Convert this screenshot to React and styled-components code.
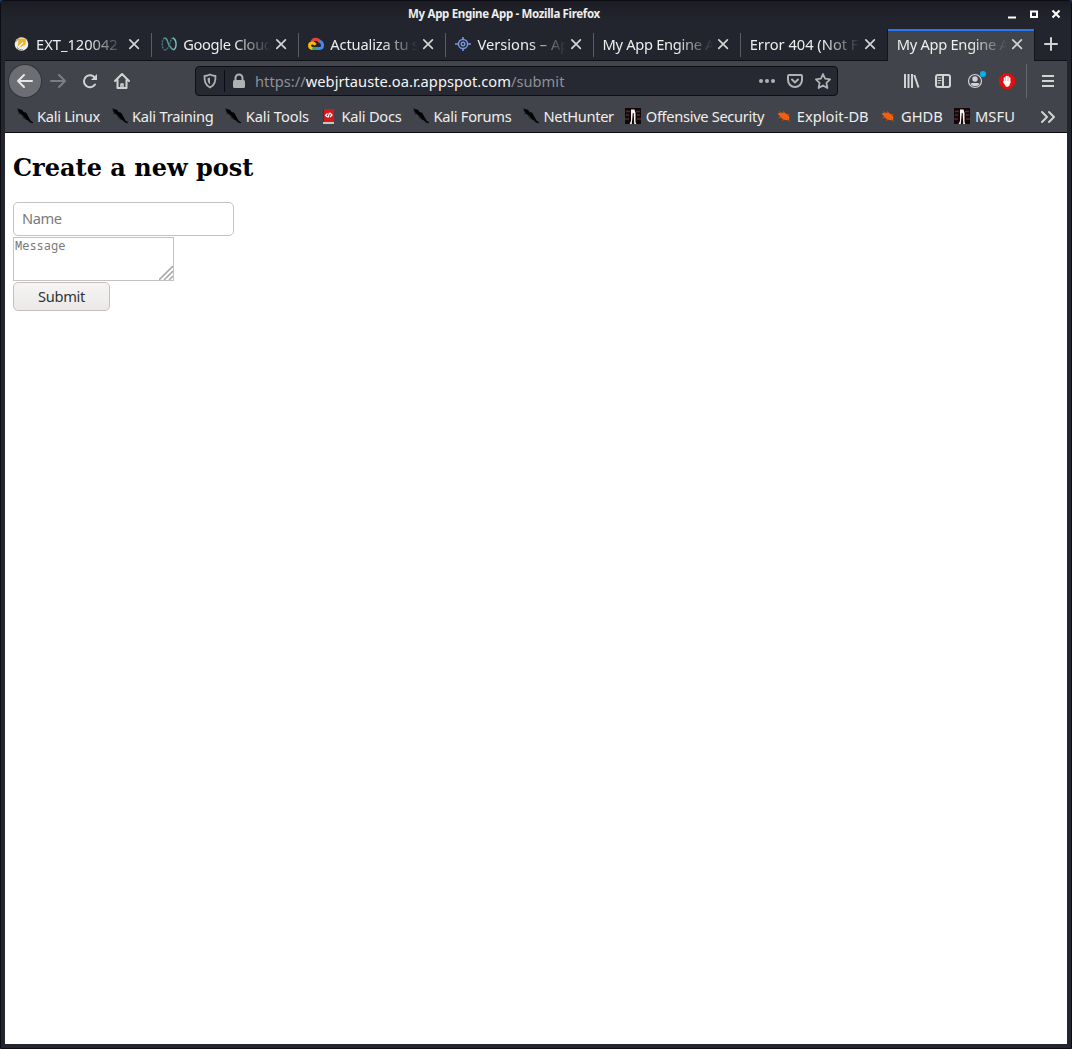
import React from 'react';
import styled, { createGlobalStyle, css } from 'styled-components';

const ui = '"Noto Sans", "Open Sans", sans-serif';

const Global = createGlobalStyle`
  html, body { margin: 0; padding: 0; background: #1d3a66; overflow: hidden; }
  *, *::before, *::after { box-sizing: border-box; }
`;

const Frame = styled.div`
  width: 1072px;
  height: 1049px;
  display: flex;
  flex-direction: column;
  padding: 0 4px 4px;
  border: 1px solid #0c0d12;
  border-radius: 4px 4px 2px 2px;
  background: #23252e;
  font-family: ${ui};
  font-size: 14.67px;
  color: #eeeeec;
`;

const TitleBar = styled.header`
  height: 27px;
  flex: none;
  display: grid;
  grid-template-columns: 14px 1fr 78px;
  align-items: center;
  margin: 0 -4px;
  padding-bottom: 2px;
  background: linear-gradient(#1b1c23, #23252e 70%);
  border-radius: 4px 4px 0 0;
`;

const Title = styled.div`
  grid-column: 2;
  justify-self: center;
  font-weight: 700;
  font-size: 11.5px;
  line-height: 24px;
  letter-spacing: -0.33px;
  white-space: nowrap;
`;

const Controls = styled.div`
  display: flex;
  justify-content: flex-end;
  gap: 8px;
  padding-right: 8px;
`;

const Glyph = styled.svg`
  display: block;
  flex: none;
  overflow: visible;
  width: ${(p) => p.$s || 16}px;
  height: ${(p) => p.$s || 16}px;
`;

const TabStrip = styled.nav`
  height: 33px;
  flex: none;
  display: flex;
  border-bottom: 1px solid #101118;
`;

const Tab = styled.div`
  width: 147.15px;
  flex: none;
  display: flex;
  align-items: center;
  padding: 0 12px 0 9px;
  height: 32px;
  background-image: linear-gradient(#5a5c63, #5a5c63);
  background-size: 1px 24px;
  background-position: right 5px;
  background-repeat: no-repeat;
  ${(p) => p.$last && css`background-image: none;`}
  ${(p) => p.$active && css`
    width: 146px;
    margin-top: 1px;
    background: #42444b;
    border-top: 2px solid #2a76f0;
    padding-bottom: 4px;
    padding-right: 11px;
    box-shadow: -1px 0 #14151b, 1px 0 #14151b;
  `}
`;

const TabLabel = styled.div`
  flex: 1;
  min-width: 0;
  overflow: hidden;
  white-space: nowrap;
  line-height: 24px;
  letter-spacing: ${(p) => p.$track || 0}px;
  margin-left: ${(p) => (p.$icon ? 6 : 0)}px;
  margin-right: 4px;
  mask-image: linear-gradient(to left, transparent, #000 36px);
`;

const NewTab = styled.div`
  flex: 1;
  display: grid;
  place-items: center;
  padding-left: 2px;
`;

const NavBar = styled.div`
  height: 40px;
  flex: none;
  display: flex;
  align-items: center;
  background: #42444b;
`;

const NavButton = styled.div`
  width: 32px;
  height: 32px;
  flex: none;
  display: grid;
  place-items: center;
  border-radius: 50%;
  ${(p) => p.$round && css`
    margin: 0 1px 0 4px;
    background: #6d6e73;
    box-shadow: 0 0 0 1px #33353b;
  `}
`;

const UrlBar = styled.div`
  width: 643px;
  height: 30px;
  margin-left: 57px;
  display: flex;
  align-items: center;
  border: 1px solid #0e0f14;
  border-radius: 4px;
  background: #272932;
  padding: 0 6px;
`;

const UrlDivider = styled.div`
  width: 1px;
  height: 22px;
  background: #0c0d12;
  margin: 0 6px;
`;

const Url = styled.div`
  flex: 1;
  margin-left: 8px;
  white-space: nowrap;
  color: #8e9096;
  letter-spacing: 0.03px;
`;

const Host = styled.span`
  color: #f5f5f5;
`;

const UrlActions = styled.div`
  display: flex;
  gap: 12px;
`;

const Tools = styled.div`
  flex: 1;
  display: flex;
  justify-content: flex-end;
  align-items: center;
  padding-right: 3px;
`;

const Divider = styled.div`
  width: 1px;
  height: 34px;
  margin: 0 5px 0 3px;
  background: #66686d;
`;

const Bookmarks = styled.div`
  height: 32px;
  flex: none;
  display: flex;
  align-items: center;
  padding: 0 0 1px 11.5px;
  background: #42444b;
  border-bottom: 1px solid #0c0d12;
`;

const Bookmark = styled.div`
  width: ${(p) => p.$w}px;
  height: 28px;
  flex: none;
  display: flex;
  align-items: center;
  gap: 4.5px;
  white-space: nowrap;
  letter-spacing: ${(p) => p.$track || 0}px;
`;

const BookmarkLabel = styled.span`
  line-height: 20px;
  padding-bottom: 1px;
`;

const Overflow = styled.div`
  padding: 2px 0 0 2px;
`;

const Page = styled.main`
  flex: 1;
  padding: 20px 8px;
  background: #fff;
  color: #000;
`;

const Heading = styled.h2`
  margin: 0 0 20px;
  font: 700 24px/29px "DejaVu Serif", serif;
`;

const Form = styled.form`
  display: flex;
  flex-direction: column;
  align-items: flex-start;
`;

const NameInput = styled.input`
  width: 221px;
  height: 34px;
  padding: 0 8px 2px;
  border: 1px solid #c6c2be;
  border-radius: 5px;
  font: 14.67px ${ui};
  letter-spacing: -0.4px;
  outline: none;
  background: #fff;
  &::placeholder { color: #7a7a7a; opacity: 1; }
`;

const MessageBox = styled.div`
  width: 161px;
  height: 44px;
  margin: 1px 0;
  display: flex;
  justify-content: space-between;
  border: 1px solid #c6c2be;
  padding-left: 1px;
  font: 12px/16px "Noto Sans Mono", "DejaVu Sans Mono", monospace;
  color: #7a7a7a;
`;

const Grip = styled.svg`
  width: 14px;
  height: 14px;
  align-self: flex-end;
`;

const Submit = styled.button`
  width: 97px;
  height: 29px;
  padding: 0 0 2px;
  border: 1px solid #c6c0ba;
  border-radius: 5px;
  background: linear-gradient(#f6f5f4, #ebe9e7);
  font: 14.67px ${ui};
  letter-spacing: -0.3px;
  color: #2e3436;
`;

const line = { fill: 'none', stroke: '#d3d3d3', strokeWidth: 2, strokeLinecap: 'round', strokeLinejoin: 'round' };
const soft = { ...line, stroke: '#b1b1b3' };

const CloseIcon = () => (
  <Glyph $s={12} viewBox="0 0 12 12"><path d="M1.8 1.800l8.600 8.600M10.400 1.800l-8.600 8.600" {...line} strokeWidth="1.7" /></Glyph>
);

const icons = {
  disk: (
    <Glyph viewBox="0 0 16 16"><circle cx="7.500" cy="8" r="6.800" fill="#efefeb" /><path d="M4.500 2.500h7.500l-.5 6.500-3 1-5 2.500z" fill="#f0b32d" /><path d="M3.500 12L9 6.500" stroke="#fff" strokeWidth="1.200" /><path d="M1.500 6l3-3.500M3 11.500l2.500 2L9 14" fill="none" stroke="#8b897e" /></Glyph>
  ),
  loops: (
    <Glyph viewBox="0 0 16 16"><g fill="none" strokeWidth="1.4"><path d="M3.500 2C.5 3 .5 13 3.500 14" stroke="#477b80" strokeDasharray="2 1" /><path d="M3.500 2C7 2 6 6 8 9s3 5 5 4.500" stroke="#569da0" /><path d="M12 2C9 3 9.500 7 8 10s-2.500 4-4.500 4" stroke="#41777b" strokeDasharray="2 .7" /><path d="M12 2c4 2 4 10 .5 12" stroke="#79c2bf" /></g></Glyph>
  ),
  cloud: (
    <Glyph viewBox="0 0 16 16"><g fill="none" strokeWidth="3"><path d="M4 6C5 2.500 10 2 12 6" stroke="#ea4335" /><path d="M11.500 5.200C16 7 15 12.500 11.800 12.500H8" stroke="#4285f4" /><path d="M8.500 12.500H4" stroke="#34a853" /><path d="M4.400 12.500C.5 12 .7 7 4.500 7c1.500 0 2.500 1 3 1.800" stroke="#fbbc05" /></g></Glyph>
  ),
  target: (
    <Glyph viewBox="0 0 16 16"><g fill="none" stroke="#7796df"><circle cx="8" cy="8" r="4.600" strokeWidth="1.500" /><circle cx="8" cy="8" r="1.800" strokeWidth="1.400" /><path d="M0 8h3M13 8h3M8 1v2.500M8 12.500V15" strokeWidth="1.600" /></g></Glyph>
  ),
  dragon: (
    <Glyph viewBox="0 0 16 16"><path d="M.3.2l2.200 1L5 1.800 6.500 4l2.700.8 1.600 3 1.700 3 1.500 2.400 2 .8-.3 1.300-2.700-.7-2-2.200-2-.8-2.700-3.300-1.800-1.500L2 4.500z" fill="#030304" /><path d="M.5 3l2 1.500M5.500 8.500l1.500 2 1 1M1 5.500l2 .5" stroke="#17181a" strokeWidth=".7" fill="none" /></Glyph>
  ),
  docs: (
    <Glyph viewBox="0 0 16 16"><path d="M2 1h11v14H2z" fill="#d9161c" /><path d="M2 1h1v14H2z" fill="#8c1015" /><path d="M2 14h11v2H2z" fill="#c9c4c4" /><path d="M6.500 5.500L4.500 7.500l2 1.500M9 5l2 2-2 2M8.500 4.800L7 9.500" fill="none" stroke="#fff" strokeWidth="1.200" /></Glyph>
  ),
  offsec: (
    <Glyph viewBox="0 0 16 16"><path d="M0 0h16v16H0z" fill="#150707" /><path d="M1 3.500h4M1 7h3M0 11h4M11 3.500h4M12 7h3M12 11h4" stroke="#4a3030" strokeWidth="1.300" /><path d="M6 1.500h3.500L10.500 5v9l.8 2H9.200L8.700 5h-.9L6.800 16H4.600L6 13z" fill="#f3f0ef" /></Glyph>
  ),
  bug: (
    <Glyph viewBox="0 0 16 16"><path d="M1.500 5.500L5 4.800 8 4.500l3.500 2 2 2.500-.5 3-3 .3-3.500-1.300L4 8.500z" fill="#f0600f" /><path d="M5.500 5.500L3 3.500M8.500 5L7.500 3M11 7l2.500-.5M5 9L2.500 10M8 11l-2 2M11.500 11.500l2.500 2" stroke="#c4561d" strokeWidth=".8" fill="none" /></Glyph>
  ),
};

const tabs = [
  { text: 'EXT_120042', icon: 'disk' },
  { text: 'Google Cloud', icon: 'loops', track: -0.32 },
  { text: 'Actualiza tu s', icon: 'cloud', track: -0.15 },
  { text: 'Versions – App', icon: 'target' },
  { text: 'My App Engine App', track: -0.3 },
  { text: 'Error 404 (Not Found)', last: true },
  { text: 'My App Engine App', active: true, track: -0.3 },
];

const bookmarks = [
  ['Kali Linux', 'dragon', 95, -0.3],
  ['Kali Training', 'dragon', 113.7, -0.24],
  ['Kali Tools', 'dragon', 95.8, -0.1],
  ['Kali Docs', 'docs', 92, -0.25],
  ['Kali Forums', 'dragon', 110, -0.27],
  ['NetHunter', 'dragon', 102.3, -0.33],
  ['Offensive Security', 'offsec', 151, -0.33],
  ['Exploit-DB', 'bug', 104.2, 0.03],
  ['GHDB', 'bug', 74, 0],
  ['MSFU', 'offsec', 83.3, 0.1],
];

export default function App() {
  return (
    <Frame>
      <Global />
      <TitleBar>
        <Title>My App Engine App - Mozilla Firefox</Title>
        <Controls>
          <Glyph $s={14} viewBox="0 0 14 14"><path d="M3 10.500h8" stroke="#fff" strokeWidth="2" /></Glyph>
          <Glyph $s={14} viewBox="0 0 14 14"><path d="M4 4.500h6v5.500H4z" fill="none" stroke="#fff" strokeWidth="2" /></Glyph>
          <Glyph $s={14} viewBox="0 0 14 14"><path d="M3.500 3.500l7 7M10.500 3.500l-7 7" stroke="#fff" strokeWidth="2" /></Glyph>
        </Controls>
      </TitleBar>
      <TabStrip>
        {tabs.map((t, i) => (
          <Tab key={i} $active={t.active} $last={t.last}>
            {icons[t.icon]}
            <TabLabel $icon={t.icon} $track={t.track}>{t.text}</TabLabel>
            <CloseIcon />
          </Tab>
        ))}
        <NewTab><Glyph viewBox="0 0 16 16"><path d="M8 2v12M2 8h12" {...line} /></Glyph></NewTab>
      </TabStrip>
      <NavBar>
        <NavButton $round><Glyph viewBox="0 0 16 16"><path d="M15 8H1.500M7 2L1 8l6 6" {...line} stroke="#e6e6e6" /></Glyph></NavButton>
        <NavButton><Glyph viewBox="0 0 16 16"><path d="M1 8h13.500M9 2l6 6-6 6" {...line} stroke="#7c7d82" /></Glyph></NavButton>
        <NavButton><Glyph viewBox="0 0 16 16"><path d="M13 11.500A6 6 0 1 1 13 5" {...line} /><path d="M15 1v6H9z" fill="#d3d3d3" /></Glyph></NavButton>
        <NavButton><Glyph viewBox="0 0 16 16"><path d="M1 8l7-7 7 7M3.500 7v8h9V7" {...line} /><path d="M7 15v-4h2v4" {...line} strokeWidth="1.500" /></Glyph></NavButton>
        <UrlBar>
          <Glyph viewBox="0 0 16 16"><path d="M8 1.500c2 1 4 1.500 5.500 1.500 0 5-.5 9-5.500 11.500C3 12 2.500 8 2.500 3 4 3 6 2.500 8 1.500z" {...soft} strokeWidth="1.800" /><path d="M8 4.500v7C6 10 5.500 8 5.500 5.300z" fill="#b1b1b3" /></Glyph>
          <UrlDivider />
          <Glyph viewBox="0 0 16 16"><rect x="2" y="7" width="12" height="8" rx="1.500" fill="#b1b1b3" /><path d="M4.500 7V5a3.500 3.500 0 0 1 7 0v2" {...soft} /></Glyph>
          <Url>https://<Host>webjrtauste.oa.r.appspot.com</Host>/submit</Url>
          <UrlActions>
            <Glyph viewBox="0 0 16 16"><g fill="#b1b1b3"><circle cx="2" cy="8" r="2" /><circle cx="8" cy="8" r="2" /><circle cx="14" cy="8" r="2" /></g></Glyph>
            <Glyph viewBox="0 0 16 16"><path d="M2 2h12a1 1 0 0 1 1 1v4a7 7 0 0 1-14 0V3a1 1 0 0 1 1-1zM5 6.500l3 3 3-3" {...soft} /></Glyph>
            <Glyph viewBox="0 0 16 16"><path d="M8 1l2.100 4.700 5 .6-3.700 3.500 1 5.200L8 12.400 3.600 15l1-5.200L.9 6.300l5-.6z" {...soft} strokeWidth="1.800" /></Glyph>
          </UrlActions>
        </UrlBar>
        <Tools>
          <NavButton><Glyph viewBox="0 0 16 16"><path d="M2 1v14M5.500 1v14M9 1v14M11.300 2l4.200 12.500" {...line} strokeLinecap="butt" /></Glyph></NavButton>
          <NavButton><Glyph viewBox="0 0 16 16"><rect x="1" y="2" width="14" height="12" rx="2" {...line} /><path d="M8 2v12" {...line} /><path d="M3 5h3M3 7.500h3M3 10h2" {...line} strokeWidth="1" /></Glyph></NavButton>
          <NavButton><Glyph viewBox="0 0 16 16"><circle cx="8" cy="8" r="6.500" {...line} strokeWidth="1.200" /><circle cx="8" cy="6" r="2.700" fill="#d3d3d3" /><path d="M3.500 11c1-1.500 2-1 4.500-1s3.500-.5 4.500 1c-2 3-7 3-9 0z" fill="#d3d3d3" /><circle cx="16" cy="1" r="3" fill="#00b3f4" /></Glyph></NavButton>
          <NavButton><Glyph viewBox="0 0 16 16"><path d="M5 0h6l5 5v6l-5 5H5l-5-5V5z" fill="#e40d0d" /><path d="M5.500 5v5M7.300 3.500V9M9 3.500V9M10.700 5v5" stroke="#fff" strokeWidth="1.500" strokeLinecap="round" /><path d="M3.800 8.500l1.500-.5h6.200l-1 4.500-1.500 1.200H7z" fill="#fff" /></Glyph></NavButton>
          <Divider />
          <NavButton><Glyph viewBox="0 0 16 16"><path d="M2 3h12M2 8h12M2 13h12" {...line} strokeLinecap="butt" /></Glyph></NavButton>
        </Tools>
      </NavBar>
      <Bookmarks>
        {bookmarks.map(([text, icon, w, track]) => (
          <Bookmark key={text} $w={w} $track={track}>{icons[icon]}<BookmarkLabel>{text}</BookmarkLabel></Bookmark>
        ))}
        <Overflow><Glyph viewBox="0 0 16 16"><path d="M2 3l5 5-5 5M9 3l5 5-5 5" {...line} /></Glyph></Overflow>
      </Bookmarks>
      <Page>
        <Heading>Create a new post</Heading>
        <Form>
          <NameInput placeholder="Name" />
          <MessageBox>
            <span>Message</span>
            <Grip viewBox="0 0 14 14"><path d="M0 14L14 0M5 14l9-9M10 14l4-4" stroke="#aaa" strokeWidth="1.600" /></Grip>
          </MessageBox>
          <Submit type="button">Submit</Submit>
        </Form>
      </Page>
    </Frame>
  );
}
